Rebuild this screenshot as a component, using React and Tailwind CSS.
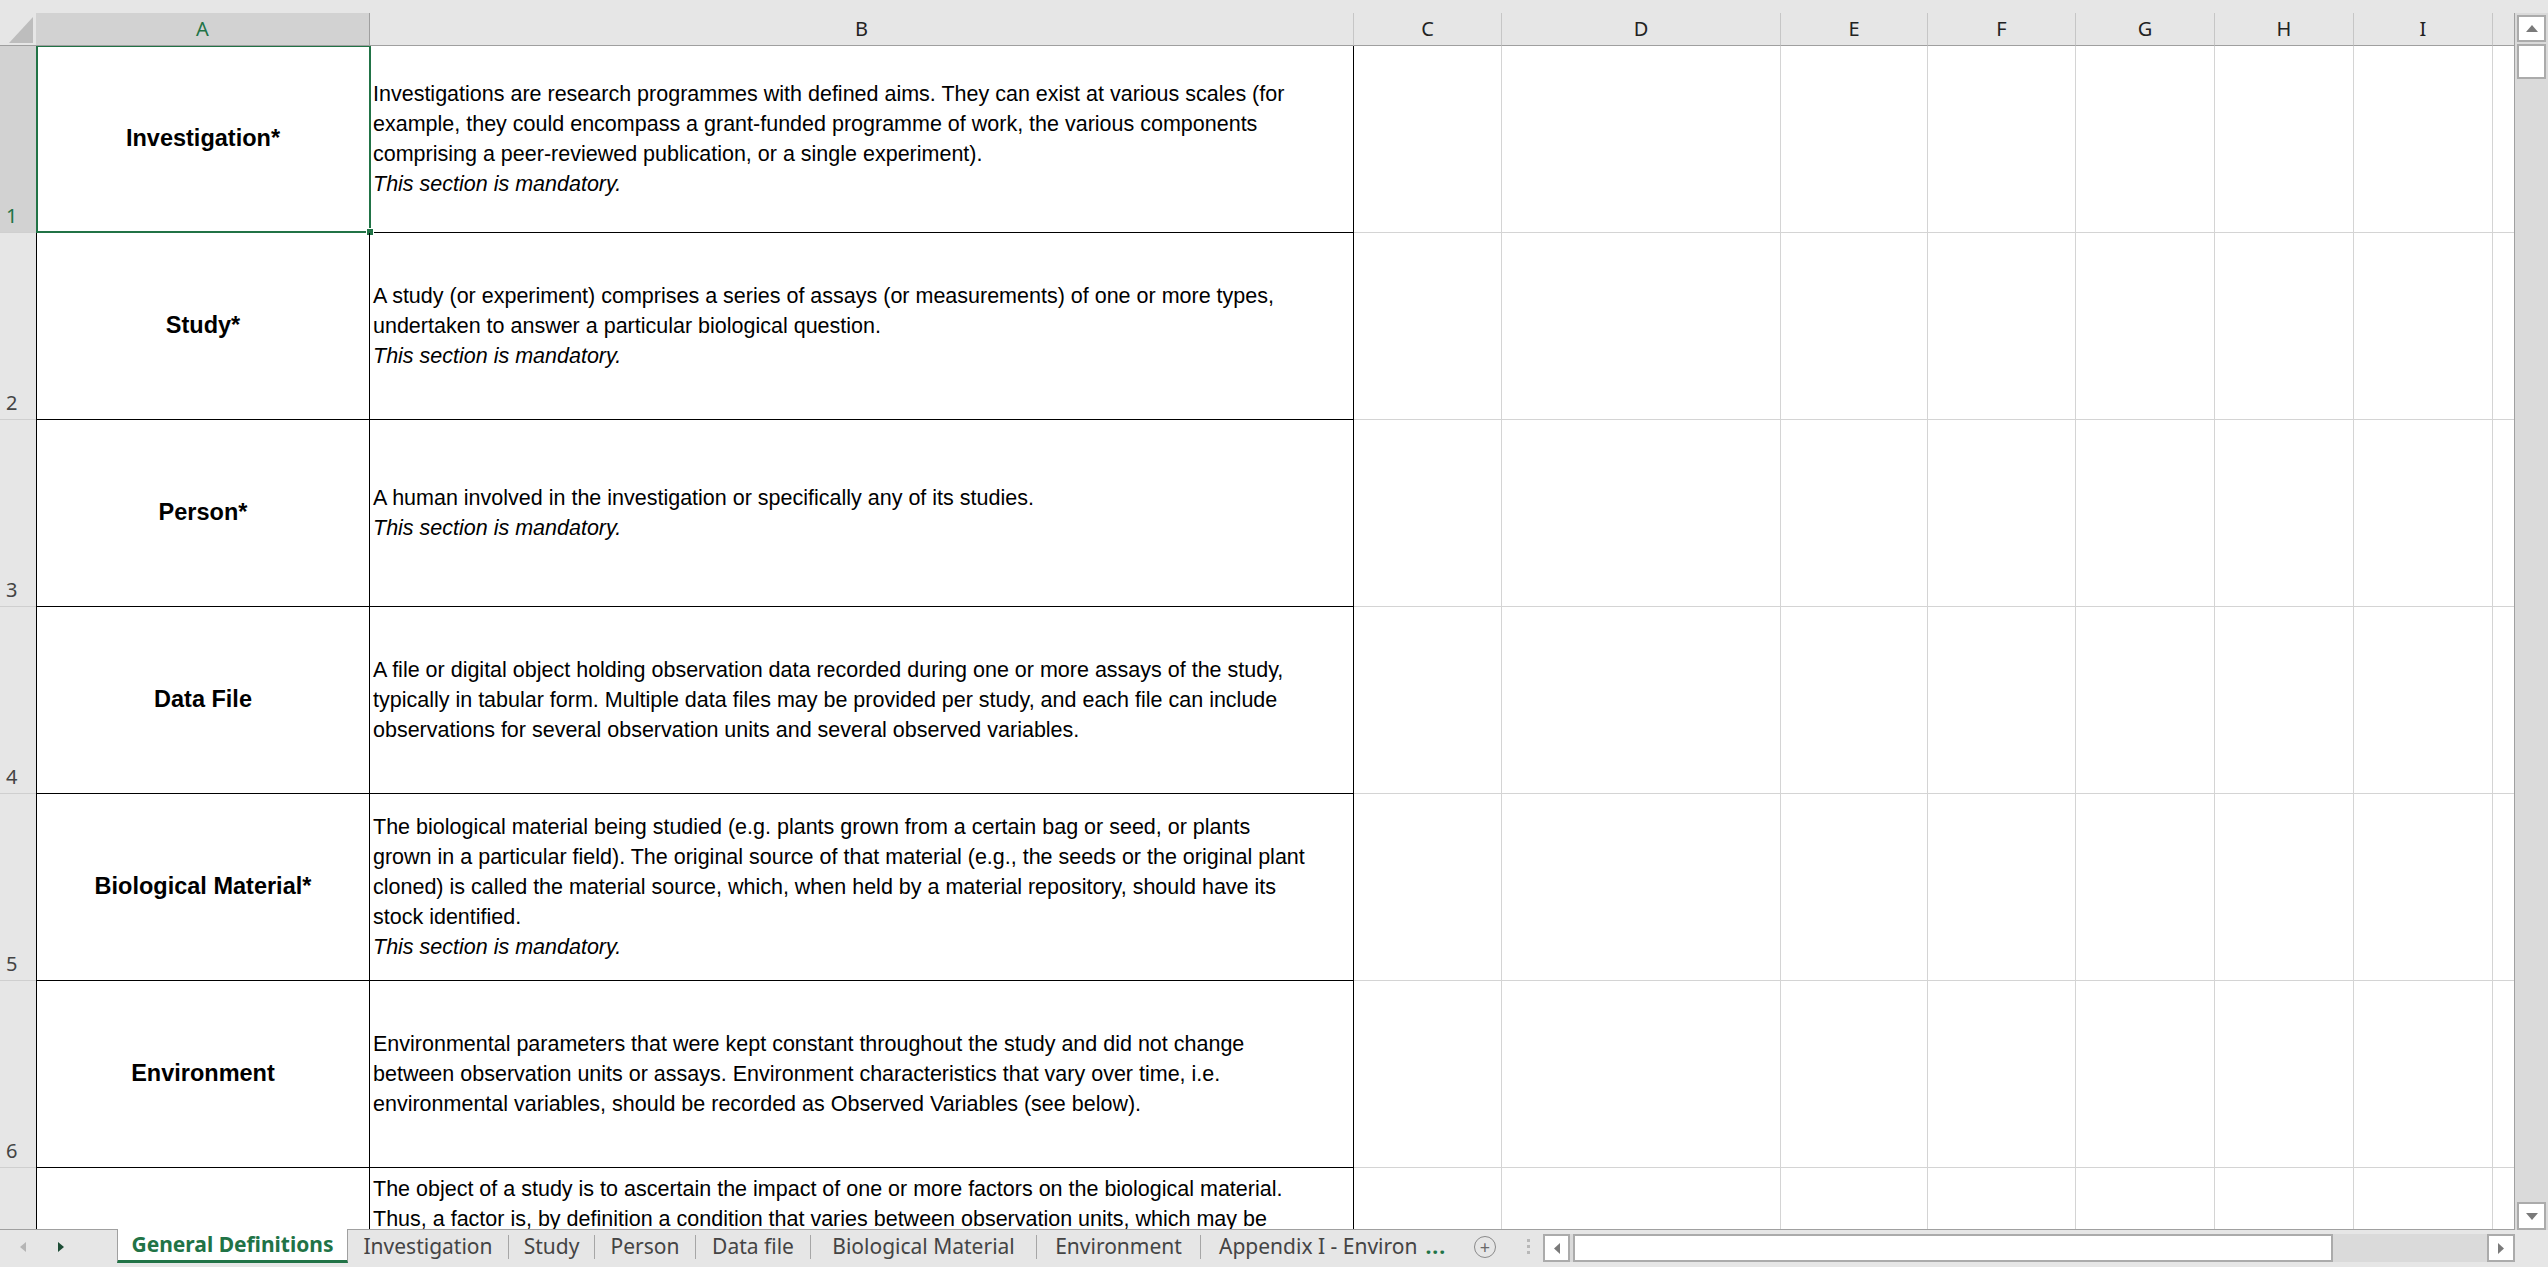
const ui = { fontFamily: '"Noto Sans", "Open Sans", sans-serif' };
const cellFont = { fontFamily: '"Liberation Sans", Arial, sans-serif' };

const ROWS = [
  {
    n: 1,
    label: "Investigation*",
    lines: [
      "Investigations are research programmes with defined aims. They can exist at various scales (for",
      "example, they could encompass a grant-funded programme of work, the various components",
      "comprising a peer-reviewed publication, or a single experiment).",
    ],
    mandatory: true,
  },
  {
    n: 2,
    label: "Study*",
    lines: [
      "A study (or experiment) comprises a series of assays (or measurements) of one or more types,",
      "undertaken to answer a particular biological question.",
    ],
    mandatory: true,
  },
  {
    n: 3,
    label: "Person*",
    lines: ["A human involved in the investigation or specifically any of its studies."],
    mandatory: true,
  },
  {
    n: 4,
    label: "Data File",
    lines: [
      "A file or digital object holding observation data recorded during one or more assays of the study,",
      "typically in tabular form. Multiple data files may be provided per study, and each file can include",
      "observations for several observation units and several observed variables.",
    ],
  },
  {
    n: 5,
    label: "Biological Material*",
    lines: [
      "The biological material being studied (e.g. plants grown from a certain bag or seed, or plants",
      "grown in a particular field). The original source of that material (e.g., the seeds or the original plant",
      "cloned) is called the material source, which, when held by a material repository, should have its",
      "stock identified.",
    ],
    mandatory: true,
  },
  {
    n: 6,
    label: "Environment",
    lines: [
      "Environmental parameters that were kept constant throughout the study and did not change",
      "between observation units or assays. Environment characteristics that vary over time, i.e.",
      "environmental variables, should be recorded as Observed Variables (see below).",
    ],
  },
];

// only the top of row 7 is on screen
const ROW7 = [
  "The object of a study is to ascertain the impact of one or more factors on the biological material.",
  "Thus, a factor is, by definition a condition that varies between observation units, which may be",
];

const REST = [
  ["C", "w-[148px]"],
  ["D", "w-[279px]"],
  ["E", "w-[147px]"],
  ["F", "w-[148px]"],
  ["G", "w-[139px]"],
  ["H", "w-[139px]"],
  ["I", "w-[139px]"],
];

const TABS = [
  ["Investigation", "w-[161px]"],
  ["Study", "w-[86px]"],
  ["Person", "w-[101px]"],
  ["Data file", "w-[115px]"],
  ["Biological Material", "w-[226px]"],
  ["Environment", "w-[164px]"],
];

function EmptyCells() {
  return (
    <>
      {REST.map(([c, w]) => (
        <div key={c} className={`${w} shrink-0 border-r border-b border-[#d4d4d4]`} />
      ))}
      <div className="flex-1 border-b border-[#d4d4d4]" />
    </>
  );
}

function Row({ row }) {
  const selected = row.n === 1;
  return (
    <div className="relative flex h-[187px] shrink-0">
      <div
        className={`w-[36px] shrink-0 flex items-end pl-[6px] pb-[1px] text-[20px] border-b border-[#cfcfcf] ${
          selected ? "bg-[#d2d2d2] text-[#217346]" : "bg-[#e6e6e6] text-[#444]"
        }`}
        style={ui}
      >
        {row.n}
      </div>
      <div
        className="w-[334px] shrink-0 flex items-center justify-center border-l border-r border-b border-black font-bold text-[23.5px] text-black"
        style={cellFont}
      >
        {row.label}
      </div>
      <div
        className="w-[984px] shrink-0 flex flex-col justify-center pl-[3px] border-r border-b border-black text-[21.5px] leading-[30px] text-black whitespace-nowrap overflow-hidden"
        style={cellFont}
      >
        {row.lines.map((l) => (
          <div key={l}>{l}</div>
        ))}
        {row.mandatory && <div className="italic">This section is mandatory.</div>}
      </div>
      <EmptyCells />
      {selected && (
        <div className="absolute left-[36px] top-[-1px] w-[335px] h-[188px] border-2 border-[#217346] pointer-events-none">
          <div className="absolute right-[-5px] bottom-[-5px] w-[8px] h-[8px] bg-[#217346] border border-white" />
        </div>
      )}
    </div>
  );
}

function Arrow({ dir, color, w = 10, h = 6 }) {
  const pts = {
    up: `0,${h} ${w},${h} ${w / 2},0`,
    down: `0,0 ${w},0 ${w / 2},${h}`,
    left: `${w},0 ${w},${h} 0,${h / 2}`,
    right: `0,0 0,${h} ${w},${h / 2}`,
  }[dir];
  return (
    <svg width={w} height={h} viewBox={`0 0 ${w} ${h}`}>
      <polygon points={pts} fill={color} />
    </svg>
  );
}

function ScrollButton({ dir, className = "" }) {
  const horiz = dir === "left" || dir === "right";
  return (
    <div className={`bg-white border-2 border-[#ababab] flex items-center justify-center ${className}`}>
      {horiz ? <Arrow dir={dir} color="#7a7a7a" w={6} h={11} /> : <Arrow dir={dir} color="#7a7a7a" w={12} h={7} />}
    </div>
  );
}

export default function App() {
  return (
    <div className="w-[2548px] h-[1267px] bg-[#e6e6e6] flex flex-col overflow-hidden select-none">
      <div className="h-[13px] shrink-0 bg-[#e6e6e6]" />
      <div className="flex h-[1217px] shrink-0">
        <div className="w-[2515px] shrink-0 flex flex-col bg-white border-r border-b border-[#a0a0a0]">
          {/* column headers */}
          <div className="flex h-[33px] shrink-0 bg-[#e6e6e6] text-[20px]" style={ui}>
            <div className="w-[36px] shrink-0 border-b border-[#9f9f9f]">
              <svg width="36" height="32" viewBox="0 0 36 32">
                <polygon points="9,30 33,30 33,4" fill="#bdbdbd" />
              </svg>
            </div>
            <div className="w-[334px] shrink-0 bg-[#d2d2d2] text-[#217346] flex items-center justify-center border-r border-b border-[#9f9f9f]">
              A
            </div>
            <div className="w-[984px] shrink-0 text-[#222] flex items-center justify-center border-r border-b border-r-[#c6c6c6] border-b-[#9f9f9f]">
              B
            </div>
            {REST.map(([c, w]) => (
              <div
                key={c}
                className={`${w} shrink-0 text-[#222] flex items-center justify-center border-r border-b border-r-[#c6c6c6] border-b-[#9f9f9f]`}
              >
                {c}
              </div>
            ))}
            <div className="flex-1 border-b border-[#9f9f9f]" />
          </div>
          {/* body */}
          <div className="flex-1 flex flex-col overflow-hidden">
            {ROWS.map((r) => (
              <Row key={r.n} row={r} />
            ))}
            <div className="flex flex-1">
              <div className="w-[36px] shrink-0 bg-[#e6e6e6]" />
              <div className="w-[334px] shrink-0 border-l border-r border-black" />
              <div
                className="w-[984px] shrink-0 pt-[6px] pl-[3px] border-r border-black text-[21.5px] leading-[30px] text-black whitespace-nowrap overflow-hidden"
                style={cellFont}
              >
                {ROW7.map((l) => (
                  <div key={l}>{l}</div>
                ))}
              </div>
              {REST.map(([c, w]) => (
                <div key={c} className={`${w} shrink-0 border-r border-[#d4d4d4]`} />
              ))}
              <div className="flex-1" />
            </div>
          </div>
        </div>
        {/* vertical scrollbar */}
        <div className="w-[33px] shrink-0 bg-[#dadada] flex flex-col pl-[2px] pr-[2px] pt-[2px]">
          <ScrollButton dir="up" className="h-[27px]" />
          <div className="mt-[2px] h-[35px] bg-white border-2 border-[#ababab]" />
          <div className="flex-1" />
          <ScrollButton dir="down" className="h-[28px]" />
        </div>
      </div>
      {/* sheet tabs */}
      <div className="flex h-[37px] shrink-0 bg-[#e6e6e6] text-[21px]" style={ui}>
        <div className="w-[117px] shrink-0 flex items-center pb-[4px]">
          <div className="ml-[20px]">
            <Arrow dir="left" color="#b5b5b5" w={6} h={10} />
          </div>
          <div className="ml-[32px]">
            <Arrow dir="right" color="#1e4d36" w={6} h={10} />
          </div>
        </div>
        <div className="w-[231px] shrink-0 h-[34px] -mt-px bg-white border-l border-r border-[#a0a0a0] border-b-[3px] border-b-[#217346] flex items-center justify-center font-bold text-[21px] text-[#217346] whitespace-nowrap">
          General Definitions
        </div>
        {TABS.map(([t, w]) => (
          <div key={t} className={`${w} shrink-0 flex items-center pb-[4px]`}>
            <div className="flex-1 text-center text-[#444] whitespace-nowrap">{t}</div>
            <div className="w-px h-[24px] bg-[#a6a6a6]" />
          </div>
        ))}
        <div className="w-[264px] shrink-0 flex items-center pb-[4px] pl-[18px] text-[#444] whitespace-nowrap">
          Appendix I - Environ
          <span className="ml-[8px] text-[#217346] font-bold tracking-[1px]">...</span>
        </div>
        <div className="w-[48px] shrink-0 flex items-center pb-[4px] pl-[9px]">
          <div className="w-[22px] h-[22px] rounded-full border border-[#8a8a8a] flex items-center justify-center text-[#6a6a6a] text-[18px] leading-none">
            +
          </div>
        </div>
        <div className="w-[30px] shrink-0 flex flex-col items-center justify-center gap-[3px] pb-[4px]">
          <div className="w-[3px] h-[3px] bg-[#b8b8b8]" />
          <div className="w-[3px] h-[3px] bg-[#b8b8b8]" />
          <div className="w-[3px] h-[3px] bg-[#b8b8b8]" />
        </div>
        {/* horizontal scrollbar */}
        <div className="w-[972px] shrink-0 h-[28px] mt-[4px] bg-[#dadada] flex">
          <ScrollButton dir="left" className="w-[27px]" />
          <div className="ml-[3px] w-[760px] bg-white border-2 border-[#ababab]" />
          <div className="flex-1" />
          <ScrollButton dir="right" className="w-[28px]" />
        </div>
      </div>
    </div>
  );
}
